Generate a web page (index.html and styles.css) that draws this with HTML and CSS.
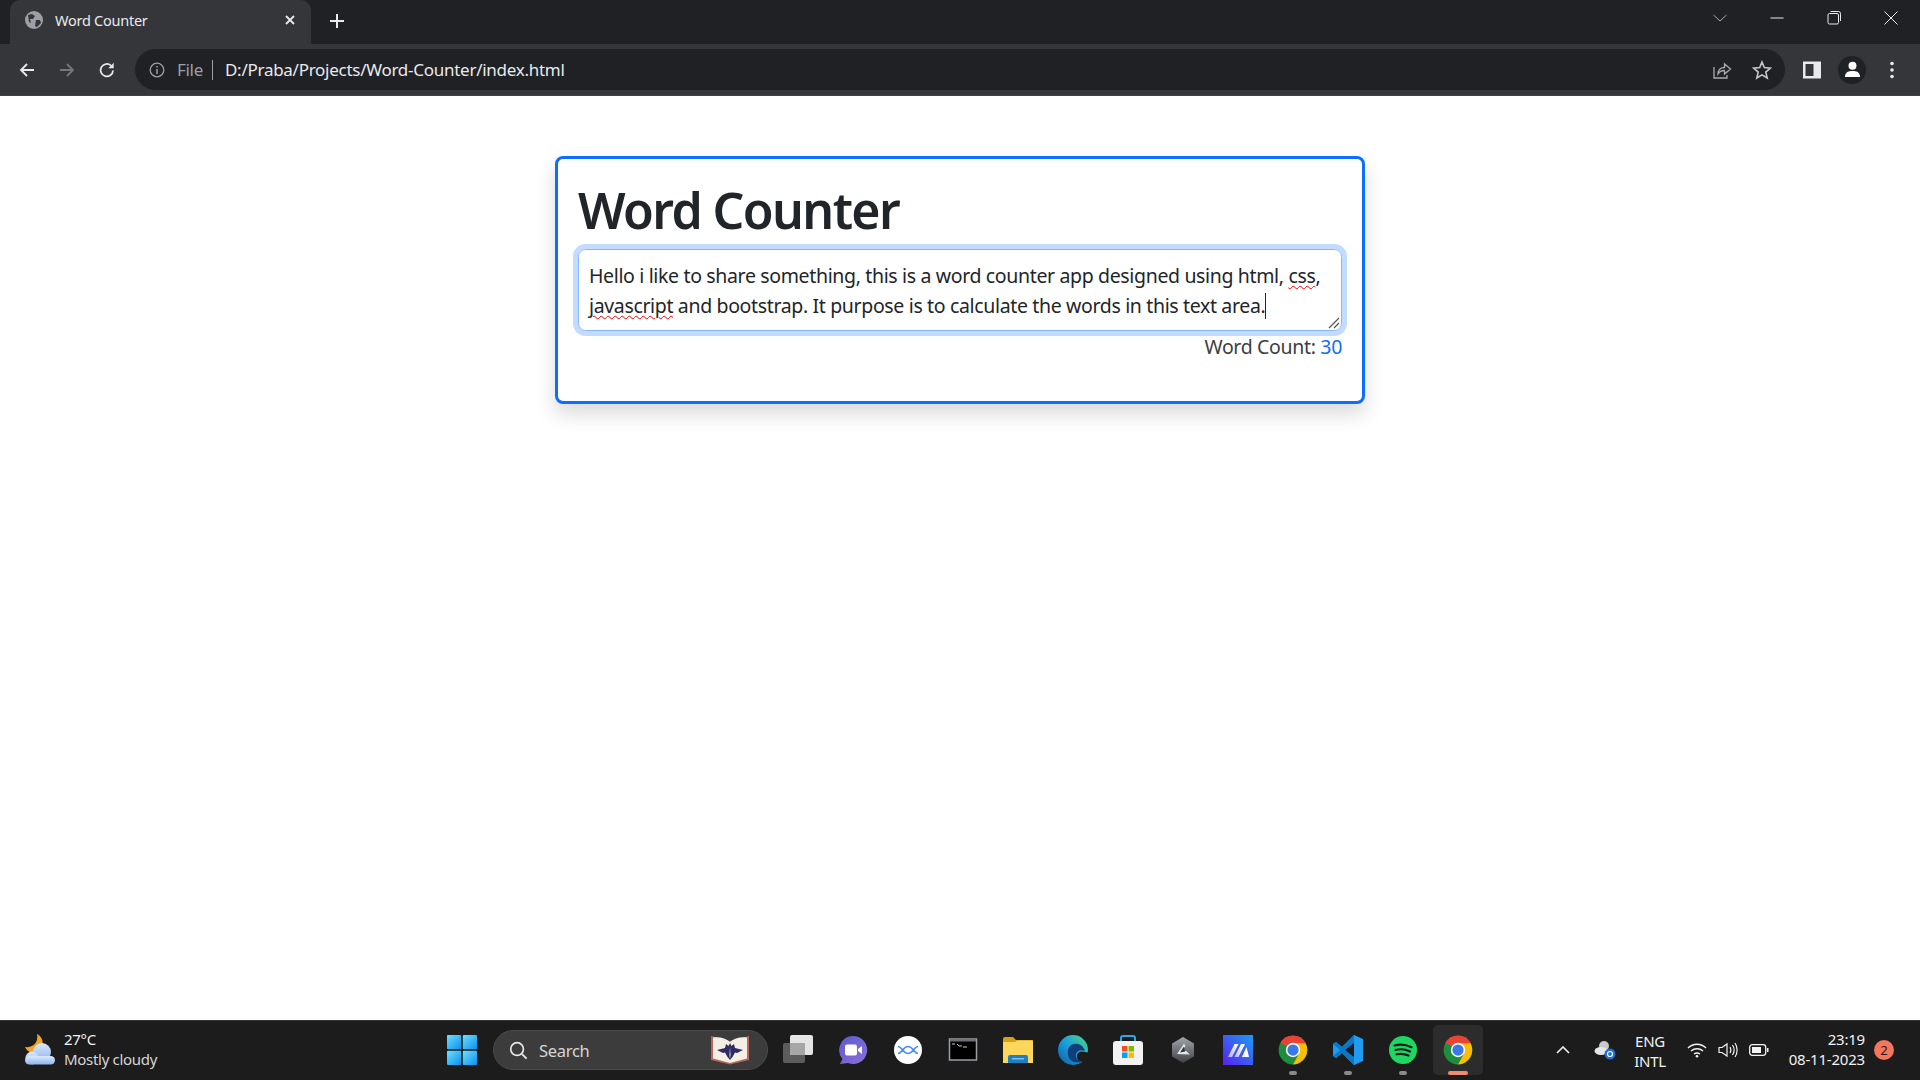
FILE: index.html
```html
<!DOCTYPE html>
<html lang="en">
<head>
    <meta charset="UTF-8">
    <title>Word Counter</title>
    <link rel="stylesheet" href="styles.css">
</head>
<body>
    <svg class="defs" width="0" height="0">
        <symbol id="chrome" viewBox="0 0 48 48">
            <circle cx="24" cy="24" r="23" fill="#1e8e3e"/>
            <path d="M24 24 L4 12.5 A23 23 0 0 1 44 12.5 Z" fill="#ea4335"/>
            <path d="M24 13 H44 A23 23 0 0 1 24 47 L34 29 Z" fill="#fbbc04"/>
            <circle cx="24" cy="24" r="11.5" fill="#fff"/>
            <circle cx="24" cy="24" r="9" fill="#3b78e7"/>
        </symbol>
    </svg>

    <header class="browser">
        <div class="tabstrip">
            <div class="tab">
                <svg class="favicon" viewBox="0 0 18 18"><circle cx="9" cy="9" r="9" fill="#9aa0a6"/><path d="M3 4 L7 3 L10 5 L8 8 L5 8 L6 12 L4 11 Z M11 9 L15 9 L16 12 L12 16 L10 15 Z" fill="#35363a"/></svg>
                <span class="tab-title">Word Counter</span>
                <svg class="tab-close" viewBox="0 0 12 12"><path d="M2 2 L10 10 M10 2 L2 10" stroke="#e8eaed" stroke-width="1.8"/></svg>
            </div>
            <svg class="new-tab" viewBox="0 0 16 16"><path d="M8 1 V15 M1 8 H15" stroke="#e8eaed" stroke-width="2"/></svg>
            <div class="window-controls">
                <svg class="win-btn" viewBox="0 0 16 16"><path d="M1.5 5 L8 11 L14.5 5" fill="none" stroke="#a9abae" stroke-width="1"/></svg>
                <svg class="win-btn" viewBox="0 0 16 16"><path d="M1.5 8 H14.5" stroke="#e8eaed" stroke-width="1"/></svg>
                <svg class="win-btn" viewBox="0 0 16 16"><rect x="2" y="3.5" width="10.5" height="10.5" rx="1.5" fill="none" stroke="#e8eaed"/><path d="M4.5 1.5 H12.5 A2 2 0 0 1 14.5 3.5 V11" fill="none" stroke="#e8eaed"/></svg>
                <svg class="win-btn" viewBox="0 0 16 16"><path d="M1.5 1.5 L14.5 14.5 M14.5 1.5 L1.5 14.5" stroke="#e8eaed" stroke-width="1"/></svg>
            </div>
        </div>
        <div class="toolbar">
            <svg class="nav-icon" viewBox="0 0 18 18"><path d="M16 9 H3 M9 3 L3 9 L9 15" fill="none" stroke="#e8eaed" stroke-width="1.8"/></svg>
            <svg class="nav-icon" viewBox="0 0 18 18"><path d="M2 9 H15 M9 3 L15 9 L9 15" fill="none" stroke="#75777b" stroke-width="1.8"/></svg>
            <svg class="nav-icon" viewBox="0 0 18 18"><path d="M15 9.5 A6.2 6.2 0 1 1 13 4.6" fill="none" stroke="#e8eaed" stroke-width="1.8"/><path d="M15.7 1.8 V7.2 H10.3 Z" fill="#e8eaed"/></svg>
            <div class="omnibox">
                <svg class="info-icon" viewBox="0 0 16 16"><circle cx="8" cy="8" r="6.8" fill="none" stroke="#9aa0a6" stroke-width="1.3"/><path d="M8 7 V12 M8 4 V5.6" stroke="#9aa0a6" stroke-width="1.5"/></svg>
                <span class="scheme">File</span>
                <span class="url">D:/Praba/Projects/Word-Counter/index.html</span>
                <svg class="omni-action share" viewBox="0 0 20 20"><path d="M2 7 V18 H15 V15" fill="none" stroke="#a9abae" stroke-width="1.3"/><path d="M6 14 C6 9 9 7.5 12.5 7.5 V4 L18.5 9 L12.5 14 V10.5 C9.5 10.5 7.5 11.5 6 14 Z" fill="none" stroke="#a9abae" stroke-width="1.3"/></svg>
                <svg class="omni-action" viewBox="0 0 20 20"><path d="M10 2 L12.3 7.6 L18.4 8.1 L13.8 12.1 L15.2 18 L10 14.9 L4.8 18 L6.2 12.1 L1.6 8.1 L7.7 7.6 Z" fill="none" stroke="#c4c6c9" stroke-width="1.6"/></svg>
            </div>
            <div class="toolbar-end">
                <svg class="panel-icon" viewBox="0 0 18 18"><rect x="0" y="0.5" width="18" height="17" fill="#e8eaed"/><rect x="2.5" y="3" width="8" height="12" fill="#35363a"/></svg>
                <span class="avatar"><svg viewBox="0 0 18 18"><circle cx="9" cy="5" r="4.2" fill="#fff"/><path d="M1 17 C1 11.5 5 10.5 9 10.5 C13 10.5 17 11.5 17 17 Z" fill="#fff"/></svg></span>
                <svg class="menu-icon" viewBox="0 0 4 18"><circle cx="2" cy="2.5" r="1.8" fill="#e8eaed"/><circle cx="2" cy="9" r="1.8" fill="#e8eaed"/><circle cx="2" cy="15.5" r="1.8" fill="#e8eaed"/></svg>
            </div>
        </div>
    </header>

    <main class="page">
        <section class="card">
            <h1>Word Counter</h1>
            <div class="textbox" role="textbox" aria-multiline="true">
                <div>Hello i like to share something, this is a word counter app designed using html, <span class="typo">css</span>,</div>
                <div><span class="typo">javascript</span> and bootstrap. It purpose is to calculate the words in this text area.<span class="caret"></span></div>
                <svg class="grip" viewBox="0 0 12 12"><path d="M1 11 L11 1 M6 11 L11 6" stroke="#555" stroke-width="1.2"/></svg>
            </div>
            <p class="count">Word Count: <span class="count-num">30</span></p>
        </section>
    </main>

    <footer class="taskbar">
        <div class="weather">
            <svg class="weather-icon" viewBox="0 0 32 34">
                <defs><linearGradient id="cloudgrad" x1="0" y1="0" x2="0" y2="1"><stop offset="0" stop-color="#dbe9fb"/><stop offset="1" stop-color="#8db5ec"/></linearGradient></defs>
                <path d="M13 1 C21 5 21 17 10 20 C6 20 3 18 1 14 C8 15 15 10 13 1 Z" fill="#f0a42a"/>
                <g fill="url(#cloudgrad)">
                    <circle cx="18" cy="19" r="9"/>
                    <circle cx="8" cy="25" r="6.5"/>
                    <rect x="1" y="23" width="30" height="8.5" rx="4.2"/>
                </g>
            </svg>
            <div class="weather-text">
                <span class="temp">27°C</span>
                <span class="sky">Mostly cloudy</span>
            </div>
        </div>
        <div class="app">
            <svg class="app-icon" viewBox="0 0 30 30">
                <defs><linearGradient id="winblue" x1="0" y1="0" x2="1" y2="1"><stop offset="0" stop-color="#6fe0ff"/><stop offset="1" stop-color="#0a8fef"/></linearGradient></defs>
                <rect x="0" y="0" width="14.2" height="14.2" rx="1" fill="url(#winblue)"/>
                <rect x="15.8" y="0" width="14.2" height="14.2" rx="1" fill="url(#winblue)"/>
                <rect x="0" y="15.8" width="14.2" height="14.2" rx="1" fill="url(#winblue)"/>
                <rect x="15.8" y="15.8" width="14.2" height="14.2" rx="1" fill="url(#winblue)"/>
            </svg>
        </div>
        <div class="search">
            <svg class="search-icon" viewBox="0 0 20 20"><circle cx="8.5" cy="8.5" r="6.7" fill="none" stroke="#e6e6e6" stroke-width="1.8"/><path d="M13.5 13.5 L18.5 18.5" stroke="#e6e6e6" stroke-width="2"/></svg>
            <span class="search-label">Search</span>
            <svg class="search-pic" viewBox="0 0 40 30">
                <path d="M1 1 L20 6 L39 1 V25 L20 29.5 L1 25 Z" fill="#b9655a"/>
                <path d="M3 2.5 C9 1.5 16 3 20 7 C24 3 31 1.5 37 2.5 V23.5 L20 28 L3 23.5 Z" fill="#f4efe4"/>
                <path d="M20 8 L21.5 11 L24 9 L25 13 L33 15 L27 18 L25 17.5 L22.5 22 L20 25 L17.5 22 L15 17.5 L13 18 L7 15 L15 13 L16 9 L18.5 11 Z" fill="#2e2d63"/>
                <path d="M20 12 L21 20 L20 24 L19 20 Z" fill="#8f8fb0"/>
            </svg>
        </div>
        <div class="app">
            <svg class="app-icon" viewBox="0 0 30 30">
                <rect x="0" y="8" width="22" height="20" rx="2" fill="#5c5c5c"/>
                <rect x="7" y="0" width="23" height="20" rx="2" fill="#e4e4e4"/>
                <rect x="7" y="8" width="15" height="12" fill="#a6a6a6"/>
            </svg>
        </div>
        <div class="app">
            <svg class="app-icon" viewBox="0 0 30 30">
                <defs><linearGradient id="chatgrad" x1="0" y1="0" x2="1" y2="1"><stop offset="0" stop-color="#5b5bd0"/><stop offset="1" stop-color="#8d6fd8"/></linearGradient></defs>
                <path d="M15 1 A14 14 0 1 1 10 28 L2 29 L4.5 24 A14 14 0 0 1 15 1 Z" fill="url(#chatgrad)"/>
                <rect x="7" y="9.5" width="12" height="11" rx="2" fill="#fff"/>
                <path d="M20 14 L24 11 V19 L20 16 Z" fill="#fff"/>
            </svg>
        </div>
        <div class="app">
            <svg class="app-icon" viewBox="0 0 30 30">
                <circle cx="15" cy="15" r="14" fill="#fff"/>
                <path d="M5 11.5 C9 11.5 10 18.5 15 18.5 C20 18.5 21 11.5 25 11.5 M5 18.5 C9 18.5 10 11.5 15 11.5 C20 11.5 21 18.5 25 18.5" fill="none" stroke="#4d8ef7" stroke-width="1.7"/>
            </svg>
        </div>
        <div class="app">
            <svg class="app-icon" viewBox="0 0 30 30">
                <rect x="1.5" y="4" width="27" height="21" fill="#000" stroke="#9a9ea2" stroke-width="1.5"/>
                <rect x="2" y="4.5" width="26" height="2" fill="#6c7074"/>
                <path d="M4 9 H7 M9 9 L11 11 H14 M15 12 H19" stroke="#c8c8c8" stroke-width="1"/>
            </svg>
        </div>
        <div class="app">
            <svg class="app-icon" viewBox="0 0 30 30">
                <path d="M0 4 A2 2 0 0 1 2 2 H10 L13 5 H30 V12 H0 Z" fill="#d9a017"/>
                <path d="M0 7 H12 L14 5.5 H28 A2 2 0 0 1 30 7.5 V28 H0 Z" fill="#fbd75b"/>
                <path d="M5 28 V22 A2 2 0 0 1 7 20 H23 A2 2 0 0 1 25 22 V28 Z" fill="#1f7fc4"/>
                <rect x="9" y="23" width="12" height="1.5" fill="#7fc1ee"/>
            </svg>
        </div>
        <div class="app">
            <svg class="app-icon" viewBox="0 0 30 30">
                <defs><linearGradient id="edgegrad" x1="0" y1="1" x2="1" y2="0"><stop offset="0" stop-color="#0c59a4"/><stop offset="0.5" stop-color="#1ba0dc"/><stop offset="1" stop-color="#4fd97b"/></linearGradient></defs>
                <circle cx="15" cy="15" r="15" fill="url(#edgegrad)"/>
                <path d="M27 16 C25 10 20 8 16 9 C11 10 9 15 10 20 C11 26 17 29 24 27 C20 26 17 23 18 19 C19 16 23 14 27 16 Z" fill="#123e7c"/>
                <path d="M31 17 C29 18 26 16 23 16.5 C19 17.5 18 21 19.5 24 C21 26.5 24 27.5 27 26 L31 31 H31 Z" fill="#1c1c1c"/>
            </svg>
        </div>
        <div class="app">
            <svg class="app-icon" viewBox="0 0 30 30">
                <path d="M8 7 V3 A2 2 0 0 1 10 1 H20 A2 2 0 0 1 22 3 V7" fill="none" stroke="#29a8e6" stroke-width="2"/>
                <rect x="0" y="6" width="30" height="24" rx="3" fill="#f2f2f2"/>
                <rect x="9" y="11" width="5.5" height="5.5" fill="#f25022"/>
                <rect x="15.5" y="11" width="5.5" height="5.5" fill="#7fba00"/>
                <rect x="9" y="17.5" width="5.5" height="5.5" fill="#00a4ef"/>
                <rect x="15.5" y="17.5" width="5.5" height="5.5" fill="#ffb900"/>
            </svg>
        </div>
        <div class="app">
            <svg class="app-icon" viewBox="0 0 30 30">
                <defs><linearGradient id="hexgrad" x1="0" y1="0" x2="0" y2="1"><stop offset="0" stop-color="#a2a5aa"/><stop offset="1" stop-color="#3e4044"/></linearGradient></defs>
                <path d="M15 2 L26 8.5 V21.5 L15 28 L4 21.5 V8.5 Z" fill="url(#hexgrad)"/>
                <path d="M16 8.5 L9 19 L22 19.5 L18 16 L14 16.5 L17.5 11 Z" fill="#e2e4e6"/>
                <path d="M16 11.5 L12 17.5 L17 16.5 Z" fill="#33353a"/>
            </svg>
        </div>
        <div class="app">
            <svg class="app-icon" viewBox="0 0 30 30">
                <defs>
                    <linearGradient id="tilegrad" x1="0" y1="1" x2="1" y2="0"><stop offset="0" stop-color="#5b20f0"/><stop offset="1" stop-color="#1d9bf5"/></linearGradient>
                    <linearGradient id="slashgrad" x1="0" y1="1" x2="0.6" y2="0"><stop offset="0" stop-color="#b8b0ff"/><stop offset="1" stop-color="#fff"/></linearGradient>
                </defs>
                <rect width="30" height="30" fill="url(#tilegrad)"/>
                <path d="M5 22 L11.5 9 H15.5 L9 22 Z M11.5 22 L18 9 H22 L15.5 22 Z" fill="url(#slashgrad)"/>
                <path d="M19 22 L23.5 12 L26 22 Z" fill="#fff"/>
            </svg>
        </div>
        <div class="app running">
            <svg class="app-icon"><use href="#chrome"/></svg>
        </div>
        <div class="app running">
            <svg class="app-icon" viewBox="0 0 30 30">
                <path d="M21 0 L30 4 V26 L21 30 L9 18 L3 23 L0 21 V9 L3 7 L9 12 Z" fill="#1f9cf0"/>
                <path d="M21 0 V30 L9 18 L3 23 L0 21 L7 15 L0 9 L3 7 L9 12 Z" fill="#0a78c8"/>
                <path d="M21 8 L12 15 L21 22 Z" fill="#1c1c1c"/>
            </svg>
        </div>
        <div class="app running">
            <svg class="app-icon" viewBox="0 0 30 30">
                <circle cx="15" cy="15" r="14" fill="#1ed760"/>
                <path d="M6.5 10.5 C12 9 18 9.5 23.5 12.2 M7.5 15 C12 13.8 17.5 14.2 22 16.5 M8.5 19.3 C12.5 18.4 16.5 18.7 20.5 20.6" fill="none" stroke="#1c1c1c" stroke-width="2.2" stroke-linecap="round"/>
            </svg>
        </div>
        <div class="app active">
            <svg class="app-icon"><use href="#chrome"/></svg>
        </div>
        <div class="tray">
            <svg class="tray-chevron" viewBox="0 0 14 8"><path d="M1 7 L7 1 L13 7" fill="none" stroke="#f2f2f2" stroke-width="1.6"/></svg>
            <svg class="tray-cloud" viewBox="0 0 22 20">
                <circle cx="10" cy="6" r="5" fill="#c9c9c9"/>
                <ellipse cx="7" cy="11" rx="6.5" ry="4" fill="#e8e8e8"/>
                <circle cx="16" cy="14" r="5.5" fill="#1f6fd6"/>
                <circle cx="16" cy="14" r="2.5" fill="none" stroke="#fff" stroke-width="1.2"/>
            </svg>
            <div class="lang"><span>ENG</span><span>INTL</span></div>
            <svg class="tray-icon" viewBox="0 0 20 16"><path d="M1 6 C6 1 14 1 19 6 M4 9 C7.5 6 12.5 6 16 9 M7 12 C8.8 10.8 11.2 10.8 13 12" fill="none" stroke="#f2f2f2" stroke-width="1.4"/><circle cx="10" cy="14.3" r="1.3" fill="#f2f2f2"/></svg>
            <svg class="tray-icon" viewBox="0 0 20 16"><path d="M1 5.5 H4 L9 2 V14 L4 10.5 H1 Z" fill="none" stroke="#f2f2f2" stroke-width="1.2"/><path d="M12 5 C13.2 7 13.2 9 12 11 M14.5 3 C16.5 6 16.5 10 14.5 13 M17 1 C19.8 5 19.8 11 17 15" fill="none" stroke="#f2f2f2" stroke-width="1.2"/></svg>
            <svg class="tray-icon" viewBox="0 0 20 14"><rect x="0.7" y="1.7" width="16" height="10.6" rx="2.5" fill="none" stroke="#f2f2f2" stroke-width="1.3"/><rect x="3" y="4" width="9" height="6" fill="#f2f2f2"/><rect x="18" y="5" width="1.5" height="4" fill="#f2f2f2"/></svg>
            <div class="clock"><span>23:19</span><span>08-11-2023</span></div>
            <span class="badge">2</span>
        </div>
    </footer>
</body>
</html>
```

FILE: styles.css
```css
* {
    box-sizing: border-box;
}
html, body {
    height: 100%;
}
body {
    margin: 0;
    display: flex;
    flex-direction: column;
    height: 1080px;
    overflow: hidden;
    font-family: "Noto Sans", "Open Sans", sans-serif;
    color: #212529;
    background: #fff;
}
.defs {
    display: block;
    height: 0;
}

/* browser chrome */
.browser {
    flex: none;
}
.tabstrip {
    display: flex;
    align-items: center;
    height: 44px;
    padding-left: 10px;
    background: #202124;
}
.tab {
    display: flex;
    align-items: center;
    width: 301px;
    height: 44px;
    padding: 0 15px 4px 15px;
    background: #35363a;
    border-radius: 10px 10px 0 0;
}
.favicon {
    width: 18px;
    height: 18px;
}
.tab-title {
    flex: 1;
    margin-left: 12px;
    font-size: 14.5px;
    letter-spacing: -0.25px;
    color: #e8eaed;
}
.tab-close {
    width: 12px;
    height: 12px;
}
.new-tab {
    width: 16px;
    height: 16px;
    margin: -2px 0 0 18px;
}
.window-controls {
    display: flex;
    gap: 41px;
    margin-left: auto;
    padding-right: 21px;
    margin-top: -8px;
}
.win-btn {
    width: 16px;
    height: 16px;
}
.toolbar {
    display: flex;
    align-items: center;
    height: 52px;
    padding-left: 18px;
    background: #35363a;
    border-bottom: 1px solid #3f4044;
}
.nav-icon {
    width: 18px;
    height: 18px;
    margin-right: 22px;
}
.omnibox {
    display: flex;
    align-items: center;
    width: 1650px;
    height: 41px;
    margin-left: -3px;
    padding: 0 13px 0 14px;
    background: #202124;
    border-radius: 21px;
}
.info-icon {
    width: 16px;
    height: 16px;
}
.scheme {
    margin-left: 12px;
    padding-right: 9px;
    font-size: 17px;
    letter-spacing: -0.3px;
    color: #9aa0a6;
    border-right: 1px solid #9aa0a6;
    line-height: 20px;
}
.url {
    margin-left: 12px;
    font-size: 17px;
    letter-spacing: -0.27px;
    color: #e8eaed;
}
.omni-action {
    width: 20px;
    height: 20px;
    margin-left: 20px;
}
.share {
    margin-left: auto;
}
.toolbar-end {
    display: flex;
    align-items: center;
    margin-left: 18px;
}
.panel-icon {
    width: 18px;
    height: 18px;
}
.avatar {
    display: flex;
    align-items: center;
    justify-content: center;
    width: 28px;
    height: 28px;
    margin-left: 17px;
    background: #202124;
    border-radius: 50%;
}
.avatar svg {
    width: 17px;
    height: 17px;
}
.menu-icon {
    width: 4px;
    height: 18px;
    margin-left: 24px;
}

/* page */
.page {
    flex: 1;
    padding-top: 60px;
}
.card {
    width: 810px;
    margin: 0 auto;
    padding: 20px;
    background: #fff;
    border: 3px solid #0d6efd;
    border-radius: 8px;
    box-shadow: 0 10px 20px rgba(0, 0, 0, 0.15);
}
h1 {
    margin: 1px 0 9px;
    font-size: 50px;
    font-weight: 600;
    line-height: 60px;
    letter-spacing: -1.6px;
}
.textbox {
    position: relative;
    height: 82px;
    padding: 11px 10px 0;
    font-size: 19.5px;
    line-height: 30px;
    letter-spacing: -0.35px;
    white-space: nowrap;
    border: 1px solid #86b7fe;
    border-radius: 7.5px;
    box-shadow: 0 0 0 5px #c2dbfe;
}
.typo {
    text-decoration: underline wavy #f00 1px;
    text-underline-offset: 2px;
}
.caret {
    display: inline-block;
    width: 1px;
    height: 26px;
    vertical-align: -6px;
    background: #212529;
}
.grip {
    position: absolute;
    right: 1px;
    bottom: 1px;
    width: 12px;
    height: 12px;
}
.count {
    margin: 1px 0 19px;
    font-size: 19.5px;
    line-height: 30px;
    letter-spacing: -0.33px;
    text-align: right;
    color: #3d3d3d;
}
.count-num {
    color: #0d6efd;
}

/* taskbar */
.taskbar {
    flex: none;
    display: flex;
    align-items: center;
    height: 60px;
    padding-bottom: 1px;
    background: #1c1c1c;
    border-top: 1px solid #333;
    color: #f2f2f2;
}
.weather {
    display: flex;
    align-items: center;
    width: 434px;
    padding-left: 24px;
}
.weather-icon {
    width: 32px;
    height: 34px;
}
.weather-text {
    display: flex;
    flex-direction: column;
    margin: -2px 0 0 8px;
    font-size: 15px;
    line-height: 20px;
    letter-spacing: -0.3px;
}
.sky {
    color: #d6d6d6;
}
.app {
    position: relative;
    flex: none;
    display: flex;
    align-items: center;
    justify-content: center;
    width: 55px;
    height: 50px;
}
.app-icon {
    width: 30px;
    height: 30px;
}
.running::after,
.active::after {
    content: "";
    position: absolute;
    left: 50%;
    bottom: 0;
    width: 8px;
    height: 4px;
    margin-left: -4px;
    background: #8a8a8a;
    border-radius: 2px;
}
.active {
    width: 50px;
    margin: 0 2.5px;
    background: #2c2c2c;
    border-radius: 5px;
}
.active::after {
    width: 20px;
    margin-left: -10px;
    background: #f08a70;
}
.search {
    flex: none;
    display: flex;
    align-items: center;
    width: 275px;
    height: 40px;
    margin: 0 2px 0 4px;
    padding: 0 17px 0 15px;
    background: #3c3c3c;
    border: 1px solid #4a4a4a;
    border-radius: 20px;
}
.search-icon {
    width: 19px;
    height: 19px;
}
.search-label {
    margin-left: 11px;
    font-size: 16.5px;
    letter-spacing: -0.3px;
    color: #d6d6d6;
}
.search-pic {
    width: 40px;
    height: 30px;
    margin-left: auto;
}
.tray {
    flex: 1;
    display: flex;
    align-items: center;
    padding-left: 71px;
}
.tray-chevron {
    width: 14px;
    height: 8px;
}
.tray-cloud {
    width: 22px;
    height: 20px;
    margin-left: 23.5px;
}
.lang {
    display: flex;
    flex-direction: column;
    align-items: center;
    width: 40px;
    margin: 2px 17px 0 14.5px;
    font-size: 15px;
    line-height: 20px;
    letter-spacing: -0.3px;
}
.tray-icon {
    width: 20px;
    height: 16px;
    margin-right: 11px;
}
.clock {
    display: flex;
    flex-direction: column;
    align-items: flex-end;
    width: 88px;
    margin: -2px 0 0 -3px;
    font-size: 15px;
    line-height: 20px;
    letter-spacing: -0.2px;
}
.badge {
    width: 20px;
    height: 20px;
    margin-left: 9px;
    font-size: 13px;
    line-height: 20px;
    text-align: center;
    color: #1c1c1c;
    background: #f3765d;
    border-radius: 50%;
}
```
